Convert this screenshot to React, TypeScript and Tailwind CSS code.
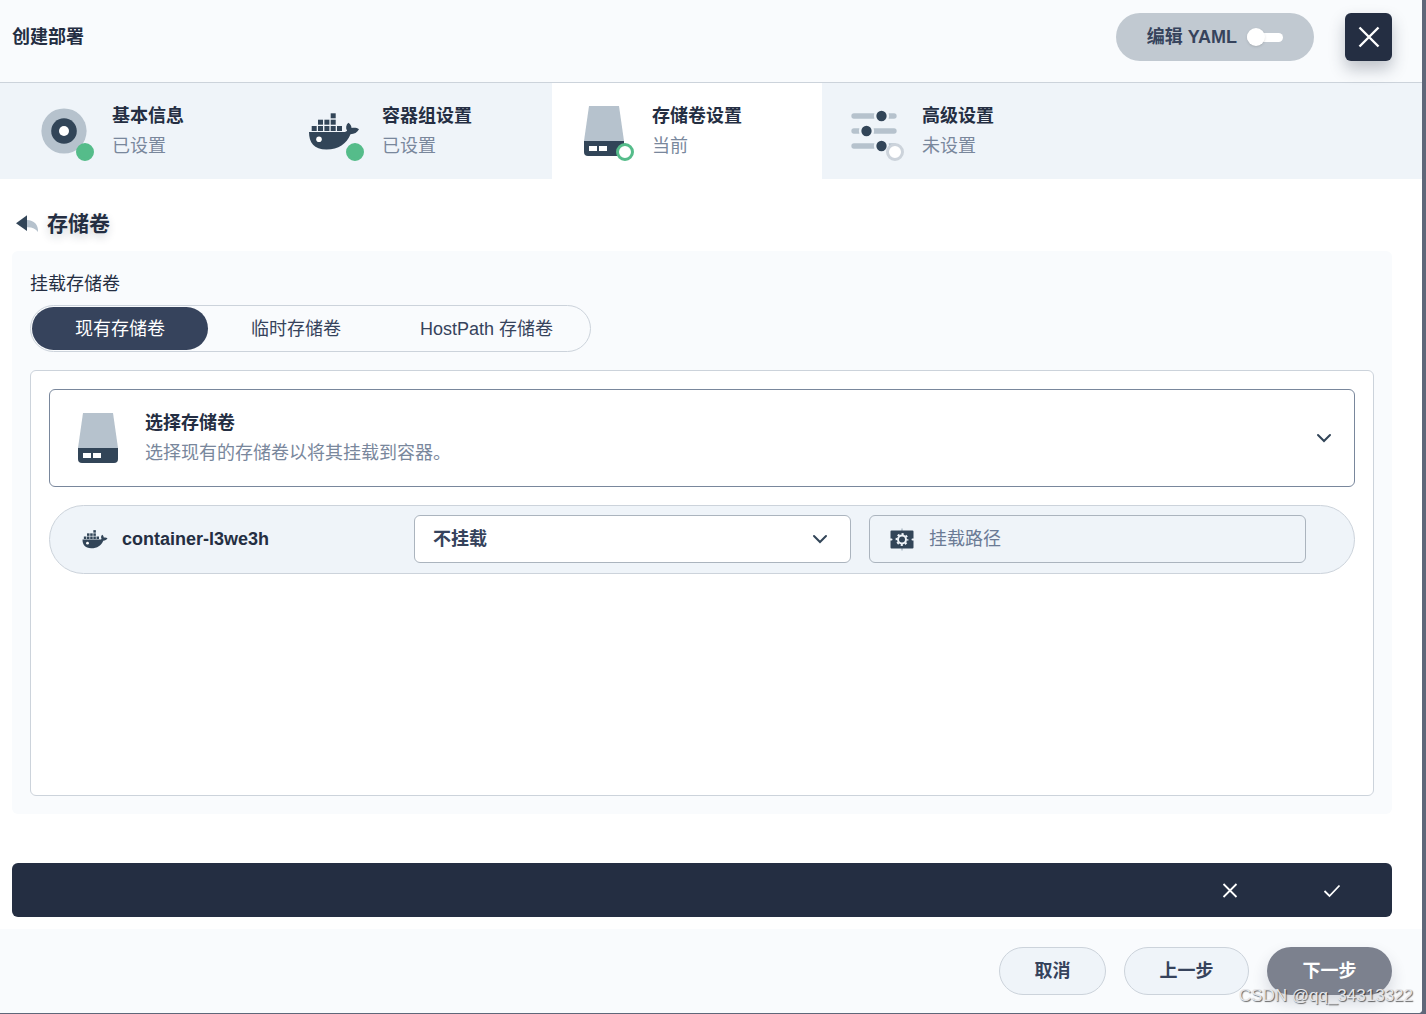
import React, { useState } from 'react';
import clsx from 'clsx';

type StepStatus = 'done' | 'current' | 'todo';

interface Step {
  id: string;
  title: string;
  desc: string;
  status: StepStatus;
  icon: React.ReactNode;
}

const DiscIcon = () => (
  <svg viewBox="0 0 60 60" className="size-[60px]">
    <circle cx="30" cy="30" r="22.6" fill="#b6c2cd" />
    <circle cx="30" cy="30" r="12.8" fill="#324558" />
    <circle cx="30" cy="30" r="5" fill="#fff" />
  </svg>
);

const DockerIcon = ({ className }: { className: string }) => (
  <svg viewBox="0 0 60 60" className={className} fill="#324558">
    <rect x="26.7" y="12.3" width="5" height="5" />
    <rect x="14" y="18.7" width="5" height="5" />
    <rect x="20.4" y="18.7" width="5" height="5" />
    <rect x="26.7" y="18.7" width="5" height="5" />
    <rect x="7.7" y="25" width="5" height="5" />
    <rect x="14" y="25" width="5" height="5" />
    <rect x="20.4" y="25" width="5" height="5" />
    <rect x="26.7" y="25" width="5" height="5" />
    <rect x="33" y="25" width="5" height="5" />
    <path d="M5 31h34.5c1.5 0 2.8-.4 3.6-1.2-1.6-2.6-1.2-5.8 1.2-8.1 2 1.3 3.1 3.2 3.3 5.4 2.7-.6 5.4-.2 7.4 1.2-1.6 3.2-4.8 4.8-8.5 5C42.5 43 34.5 48.5 22.5 48.5 10 48.5 5 41.5 5 31z" />
    <circle cx="15" cy="38.3" r="2.8" fill="#fff" />
  </svg>
);

const StorageIcon = () => (
  <svg viewBox="0 0 60 60" className="size-[60px] shrink-0">
    <path d="M15 5h30l5 35H10z" fill="#b6c2cd" />
    <path d="M10 40h40v11a4 4 0 0 1-4 4H14a4 4 0 0 1-4-4z" fill="#324558" />
    <path d="M15 45h8v5h-8zM25 45h8v5h-8z" fill="#fff" />
  </svg>
);

const SlidersIcon = () => (
  <svg viewBox="0 0 60 60" className="size-[60px]">
    <path
      d="M10 15h40M10 30h40M10 45h40"
      stroke="#b6c2cd"
      strokeWidth="5.3"
      strokeLinecap="round"
    />
    <g fill="#324558" stroke="#eff4f9" strokeWidth="2.5">
      <circle cx="37.5" cy="15" r="6.4" />
      <circle cx="22.5" cy="30" r="6.4" />
      <circle cx="37.5" cy="45" r="6.4" />
    </g>
  </svg>
);

const BackIcon = () => (
  <svg viewBox="0 0 30 30" className="size-[30px]">
    <path d="M15 11c7 .2 11.5 4.5 11 12-2.2-3.4-6-5-11-4.8z" fill="#b6c2cd" />
    <path d="M4 14.2 15 6.3v15.7z" fill="#324558" />
  </svg>
);

const MountIcon = () => (
  <svg viewBox="0 0 30 30" className="size-[30px] shrink-0">
    <path d="M14.2 4.500h1.600v3h-1.600zM14.200 23.500h1.600v3h-1.600z" fill="#b6c2cd" />
    <path
      d="M4.500 6.500h21a1 1 0 0 1 1 1v7h-1a1 1 0 0 0 0 2h1v7a1 1 0 0 1-1 1h-21a1 1 0 0 1-1-1v-7h1a1 1 0 0 0 0-2h-1v-7a1 1 0 0 1 1-1z"
      fill="#324558"
    />
    <circle cx="15" cy="15.500" r="4" fill="none" stroke="#eff4f9" strokeWidth="2" />
    <circle
      cx="15"
      cy="15.500"
      r="5.500"
      fill="none"
      stroke="#eff4f9"
      strokeWidth="1.800"
      strokeDasharray="2.160 2.160"
      strokeDashoffset="1.080"
    />
  </svg>
);

const ChevronIcon = () => (
  <svg viewBox="0 0 30 30" className="size-[30px] shrink-0" fill="none" stroke="#324558" strokeWidth="2">
    <path d="m9 12 6 6 6-6" strokeLinecap="round" />
  </svg>
);

const steps: Step[] = [
  { id: 'base', title: '基本信息', desc: '已设置', status: 'done', icon: <DiscIcon /> },
  {
    id: 'pod',
    title: '容器组设置',
    desc: '已设置',
    status: 'done',
    icon: <DockerIcon className="size-[60px]" />,
  },
  { id: 'volume', title: '存储卷设置', desc: '当前', status: 'current', icon: <StorageIcon /> },
  { id: 'advance', title: '高级设置', desc: '未设置', status: 'todo', icon: <SlidersIcon /> },
];

const volumeTabs = ['现有存储卷', '临时存储卷', 'HostPath 存储卷'];

const StepItem: React.FC<{ step: Step }> = ({ step }) => (
  <button
    type="button"
    aria-current={step.status === 'current' ? 'step' : undefined}
    className={clsx(
      'flex w-[270px] items-center gap-[18px] py-[18px] pl-[22px] text-left',
      step.status === 'current' && 'bg-white'
    )}
  >
    <span className="relative shrink-0">
      {step.icon}
      <span
        className={clsx(
          'absolute right-0 bottom-0 size-[18px] rounded-full border-3',
          step.status === 'done' && 'border-[#55bc8a] bg-[#55bc8a]',
          step.status === 'current' && 'border-[#55bc8a] bg-white',
          step.status === 'todo' && 'border-[#ccd3db] bg-white'
        )}
      />
    </span>
    <span className="leading-[30px]">
      <span className="block font-bold">{step.title}</span>
      <span className="block text-[#79879c]">{step.desc}</span>
    </span>
  </button>
);

export default function App() {
  const [activeTab, setActiveTab] = useState(volumeTabs[0]);
  const [path, setPath] = useState('');

  return (
    <div className="relative flex min-h-screen bg-[#5f6779] pr-1 pb-px font-['Liberation_Sans','Noto_Sans_CJK_SC',sans-serif] text-lg text-[#242e42]">
      <div className="flex flex-1 flex-col overflow-hidden rounded-br bg-white">
        <header className="flex justify-between border-b border-[#ccd3db] bg-[#f9fbfd] pt-[13px] pr-[30px] pb-[21px] pl-3">
          <h1 className="font-bold leading-[48px]">创建部署</h1>
          <div className="flex gap-[31px]">
            <button
              type="button"
              role="switch"
              aria-checked="false"
              className="flex h-12 items-center gap-2.5 rounded-full bg-[#c1c9d1] px-[31px] font-bold text-[#36435c]"
            >
              编辑 YAML
              <span className="flex h-[9px] w-9 items-center rounded-full bg-white">
                <span className="size-[18px] rounded-full bg-white shadow" />
              </span>
            </button>
            <button
              type="button"
              aria-label="关闭"
              className="z-10 flex h-12 w-[47px] items-center justify-center rounded-md bg-[#242e42] shadow-[0_8px_16px_0_rgba(36,46,66,0.28)]"
            >
              <svg viewBox="0 0 30 30" className="size-[30px]" stroke="#fff" strokeWidth="2.4">
                <path d="m5.500 5.500 19 19M24.500 5.500l-19 19" />
              </svg>
            </button>
          </div>
        </header>

        <nav className="flex bg-[#eff4f9] pl-3">
          {steps.map((step) => (
            <StepItem key={step.id} step={step} />
          ))}
        </nav>

        <main className="flex flex-1 flex-col pt-[30px] pr-[30px] pb-3 pl-3">
          <div className="flex items-center gap-[5px]">
            <button type="button" aria-label="返回">
              <BackIcon />
            </button>
            <h2 className="text-[21px] leading-[30px] font-bold text-shadow-[0_4px_8px_rgba(36,46,66,0.2)]">
              存储卷
            </h2>
          </div>

          <section className="mt-3 flex flex-1 flex-col rounded-md bg-[#f9fbfd] p-[18px]">
            <p className="leading-[30px]">挂载存储卷</p>
            <div className="mt-1.5 flex self-start rounded-full border border-[#ccd3db] p-px">
              {volumeTabs.map((tab) => (
                <button
                  key={tab}
                  type="button"
                  onClick={() => setActiveTab(tab)}
                  className={clsx(
                    'h-[43px] min-w-44 rounded-full px-9',
                    tab === activeTab ? 'bg-[#36435c] text-white' : 'text-[#36435c]'
                  )}
                >
                  {tab}
                </button>
              ))}
            </div>

            <div className="mt-[18px] flex-1 rounded-md border border-[#ccd3db] bg-white p-[18px]">
              <button
                type="button"
                className="flex w-full items-center gap-[17px] rounded-md border border-[#79879c] py-[18px] pr-[15px] pl-[18px] text-left"
              >
                <StorageIcon />
                <span className="flex-1 leading-[30px]">
                  <span className="block font-bold">选择存储卷</span>
                  <span className="block text-[#79879c]">选择现有的存储卷以将其挂载到容器。</span>
                </span>
                <ChevronIcon />
              </button>

              <div className="mt-[18px] flex items-center rounded-full border border-[#ccd3db] bg-[#eff4f9] pt-[9px] pr-12 pb-2.5 pl-[30px]">
                <div className="flex w-[334px] items-center gap-3 font-bold">
                  <DockerIcon className="size-[30px]" />
                  container-l3we3h
                </div>
                <div className="grid flex-1 grid-cols-2 gap-[18px]">
                  <div className="relative">
                    <select
                      aria-label="挂载方式"
                      className="h-12 w-full appearance-none rounded-md border border-[#abb4be] bg-white px-[18px] font-bold text-[#36435c]"
                    >
                      <option>不挂载</option>
                      <option>只读</option>
                      <option>读写</option>
                    </select>
                    <span className="pointer-events-none absolute inset-y-0 right-4 flex items-center">
                      <ChevronIcon />
                    </span>
                  </div>
                  <label className="flex h-12 items-center gap-3 rounded-md border border-[#abb4be] px-[17px]">
                    <MountIcon />
                    <input
                      type="text"
                      aria-label="挂载路径"
                      placeholder="挂载路径"
                      value={path}
                      onChange={(e) => setPath(e.target.value)}
                      className="min-w-0 flex-1 bg-transparent outline-none placeholder:text-[#6b7b95]"
                    />
                  </label>
                </div>
              </div>
            </div>
          </section>

          <div className="mt-[49px] flex h-[54px] justify-end rounded-md bg-[#242e42] pr-[9px]">
            <button type="button" aria-label="取消编辑" className="flex w-[102px] items-center justify-center">
              <svg viewBox="0 0 24 24" className="size-6" stroke="#fff" strokeWidth="1.8">
                <path d="m5.500 6 13 13M18.500 6l-13 13" />
              </svg>
            </button>
            <button type="button" aria-label="确认" className="flex w-[102px] items-center justify-center">
              <svg viewBox="0 0 24 24" className="size-6" fill="none" stroke="#fff" strokeWidth="1.8">
                <path d="m4.500 13 5 5L19.500 7.500" />
              </svg>
            </button>
          </div>
        </main>

        <footer className="flex justify-end gap-[18px] bg-[#f9fbfd] py-[18px] pr-[30px] font-bold text-[#36435c]">
          <button type="button" className="h-12 w-[107px] rounded-full border border-[#ccd3db] bg-[#eff4f9]">
            取消
          </button>
          <button type="button" className="h-12 w-[125px] rounded-full border border-[#ccd3db] bg-[#eff4f9]">
            上一步
          </button>
          <button
            type="button"
            className="h-12 w-[125px] rounded-full bg-[#7c818e] text-white shadow-[0_8px_16px_0_rgba(36,46,66,0.16)]"
          >
            下一步
          </button>
        </footer>
      </div>

      <span className="pointer-events-none absolute right-[13px] bottom-1.5 text-[17px] leading-6 text-[#e4e5e8] text-shadow-[1px_1px_1px_rgba(0,0,0,0.6)]">
        CSDN @qq_34313322
      </span>
    </div>
  );
}
